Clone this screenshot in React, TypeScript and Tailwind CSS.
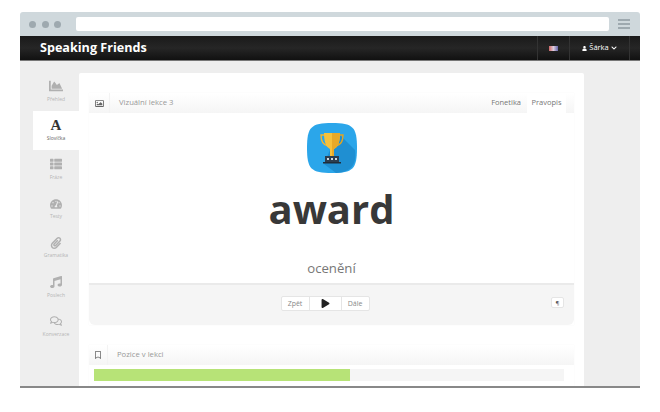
import { FaChartArea, FaChevronDown, FaMusic, FaPaperclip, FaPlay, FaRegBookmark, FaRegComments, FaRegImage, FaTachometerAlt, FaThList, FaUser } from "react-icons/fa"
import type { ReactNode } from "react"

const font = "font-['Open_Sans',sans-serif]"

const navItems: { label: string; icon: ReactNode; active?: boolean }[] = [
    { label: "Přehled", icon: <FaChartArea size={14} /> },
    { label: "Slovíčka", icon: <span className="font-['Liberation_Serif',serif] text-[15px] leading-none font-bold text-[#333]">A</span>, active: true },
    { label: "Fráze", icon: <FaThList size={12} /> },
    { label: "Testy", icon: <FaTachometerAlt size={12} /> },
    { label: "Gramatika", icon: <FaPaperclip size={12} /> },
    { label: "Poslech", icon: <FaMusic size={12} /> },
    { label: "Konverzace", icon: <FaRegComments size={12} /> },
]

function Trophy() {
    return (
        <svg viewBox="0 0 50 50" className="size-[50px]">
            <path d="M0 25C0 4 4 0 25 0s25 4 25 25-4 25-25 25S0 46 0 25Z" fill="#2ba6ea" />
            <path d="M33 12 48 27c2 16-5 22-19 23l-12-9 6-14Z" fill="#1f8fd2" />
            <path d="M18 12h-4c0 6 2 10 7 11" fill="none" stroke="#f2b632" strokeWidth="1.4" />
            <path d="M32 12h4c0 6-2 10-7 11" fill="none" stroke="#e5a520" strokeWidth="1.4" />
            <path d="M17 10h16c0 9-2 14-6 16v7h-4v-7c-4-2-6-7-6-16Z" fill="#f6c13c" />
            <path d="M25 10h8c0 9-2 14-6 16v7h-2Z" fill="#e8a928" />
            <path d="M18 33h14v6H18Z" fill="#2c3e50" />
            <path d="M16 39h18v1.5H16Z" fill="#1f2d3b" />
            <path d="M20 35h2v2h-2ZM24 35h2v2h-2ZM28 35h2v2h-2Z" fill="#cfd8dc" />
        </svg>
    )
}

function PanelHead({ icon, title, iconWidth, children }: { icon: ReactNode; title: string; iconWidth: string; children?: ReactNode }) {
    return (
        <div className="flex h-5 items-stretch bg-gradient-to-b from-white to-[#f5f5f5]">
            <div className={`flex items-center justify-center border-r border-[#f3f3f3] text-[#666] ${iconWidth}`}>{icon}</div>
            <div className="flex flex-1 items-center pl-[9px] text-[7.7px] text-[#999]">{title}</div>
            {children}
        </div>
    )
}

export default function App() {
    return (
        <div className={`h-[412px] w-[660px] overflow-hidden bg-white px-5 pt-3 ${font}`}>
            <div className="flex h-[376px] flex-col border-b-2 border-[#888]">
                {/* browser chrome */}
                <div className="flex h-6 shrink-0 items-center rounded-t-[3px] bg-[#cfd8dc] pr-[10px] pl-[9px]">
                    <div className="flex gap-[5.5px]">
                        <span className="size-[7px] rounded-full bg-[#9ea9af]" />
                        <span className="size-[7px] rounded-full bg-[#9ea9af]" />
                        <span className="size-[7px] rounded-full bg-[#9ea9af]" />
                    </div>
                    <div className="ml-[15px] h-[14px] flex-1 rounded-[2px] bg-white" />
                    <div className="ml-[9px] flex w-[12px] flex-col gap-[2px]">
                        <span className="h-[2px] bg-[#9ea9af]" />
                        <span className="h-[2px] bg-[#9ea9af]" />
                        <span className="h-[2px] bg-[#9ea9af]" />
                    </div>
                </div>

                {/* app navbar */}
                <div className="flex h-[25px] shrink-0 items-stretch border-b border-[#777] bg-gradient-to-b from-[#1a1a1a] via-[#262626] to-[#111] pr-[10px] pl-5 text-white">
                    <div className="flex flex-1 items-center text-[12.6px] font-bold">Speaking Friends</div>
                    <div className="flex w-[33px] items-center justify-center border-x border-[#333]">
                        <span className="h-[5px] w-[9px] bg-gradient-to-r from-[#c66] via-[#dcd] to-[#66a]" />
                    </div>
                    <div className="flex w-[60px] items-center justify-center gap-[2px] border-r border-[#333] text-[7.5px]">
                        <FaUser size={5} />
                        <span>Šárka</span>
                        <FaChevronDown size={6} />
                    </div>
                </div>

                <div className="flex min-h-0 flex-1 bg-[#eeeeee] pr-[56px]">
                    {/* side menu */}
                    <div className="flex w-[59px] shrink-0 flex-col items-end pt-[11px]">
                        {navItems.map((item) => (
                            <div
                                key={item.label}
                                className={`flex h-[39.2px] w-[46px] flex-col items-center justify-center gap-[3px] pb-[3px] text-[5px] leading-none ${item.active ? "bg-white text-[#666]" : "text-[#b5b5b5]"}`}
                            >
                                <div className="flex h-[15px] items-center text-[#b0b0b0]">{item.icon}</div>
                                <span>{item.label}</span>
                            </div>
                        ))}
                    </div>

                    {/* content */}
                    <div className="mt-3 flex-1 overflow-hidden rounded-t-[2px] bg-white px-[10px] pt-5">
                        <div className="shadow-[0_0_1px_rgba(0,0,0,0.06)]">
                            <PanelHead icon={<FaRegImage size={9} />} title="Vizuální lekce 3" iconWidth="w-[21px]">
                                <div className="flex items-center px-[6px] text-[7.5px] text-[#777]">Fonetika</div>
                                <div className="mr-2 flex w-[39px] items-center justify-center bg-white text-[7.5px] text-[#777]">Pravopis</div>
                            </PanelHead>
                            <div className="flex h-[172px] flex-col items-center border-b-2 border-[#eaeaea] pt-[10px]">
                                <Trophy />
                                <div className="mt-px text-[40px] leading-[70px] font-bold text-[#383838]">award</div>
                                <div className="mt-[14px] text-[13.2px] leading-5 text-[#777]">ocenění</div>
                            </div>
                            <div className="relative flex h-[40px] justify-center rounded-b-[6px] bg-[#f5f5f5] pt-[11px] pr-[13px]">
                                <div className="flex h-[15px] items-stretch rounded-[2px] border border-[#e5e5e5] bg-white text-[7px] leading-none text-[#888]">
                                    <span className="flex w-[27px] items-center justify-center">Zpět</span>
                                    <span className="flex w-[33px] items-center justify-center border-x border-[#e5e5e5] text-[#222]">
                                        <FaPlay size={9} />
                                    </span>
                                    <span className="flex w-[27px] items-center justify-center">Dále</span>
                                </div>
                                <span className="absolute top-[12px] right-[10px] flex h-[11px] w-[13px] items-center justify-center rounded-[2px] border border-[#e5e5e5] bg-white text-[6px] leading-none text-[#555]">
                                    ¶
                                </span>
                            </div>
                        </div>

                        <div className="mt-5 h-[60px] shadow-[0_0_1px_rgba(0,0,0,0.06)]">
                            <PanelHead icon={<FaRegBookmark size={8} />} title="Pozice v lekci" iconWidth="w-[19px]" />
                            <div className="mt-1 mr-[10px] ml-[5px] h-3 bg-[#f5f5f5]">
                                <div className="h-full w-[54.4%] bg-[#b7e377]" />
                            </div>
                        </div>
                    </div>
                </div>
            </div>
        </div>
    )
}
